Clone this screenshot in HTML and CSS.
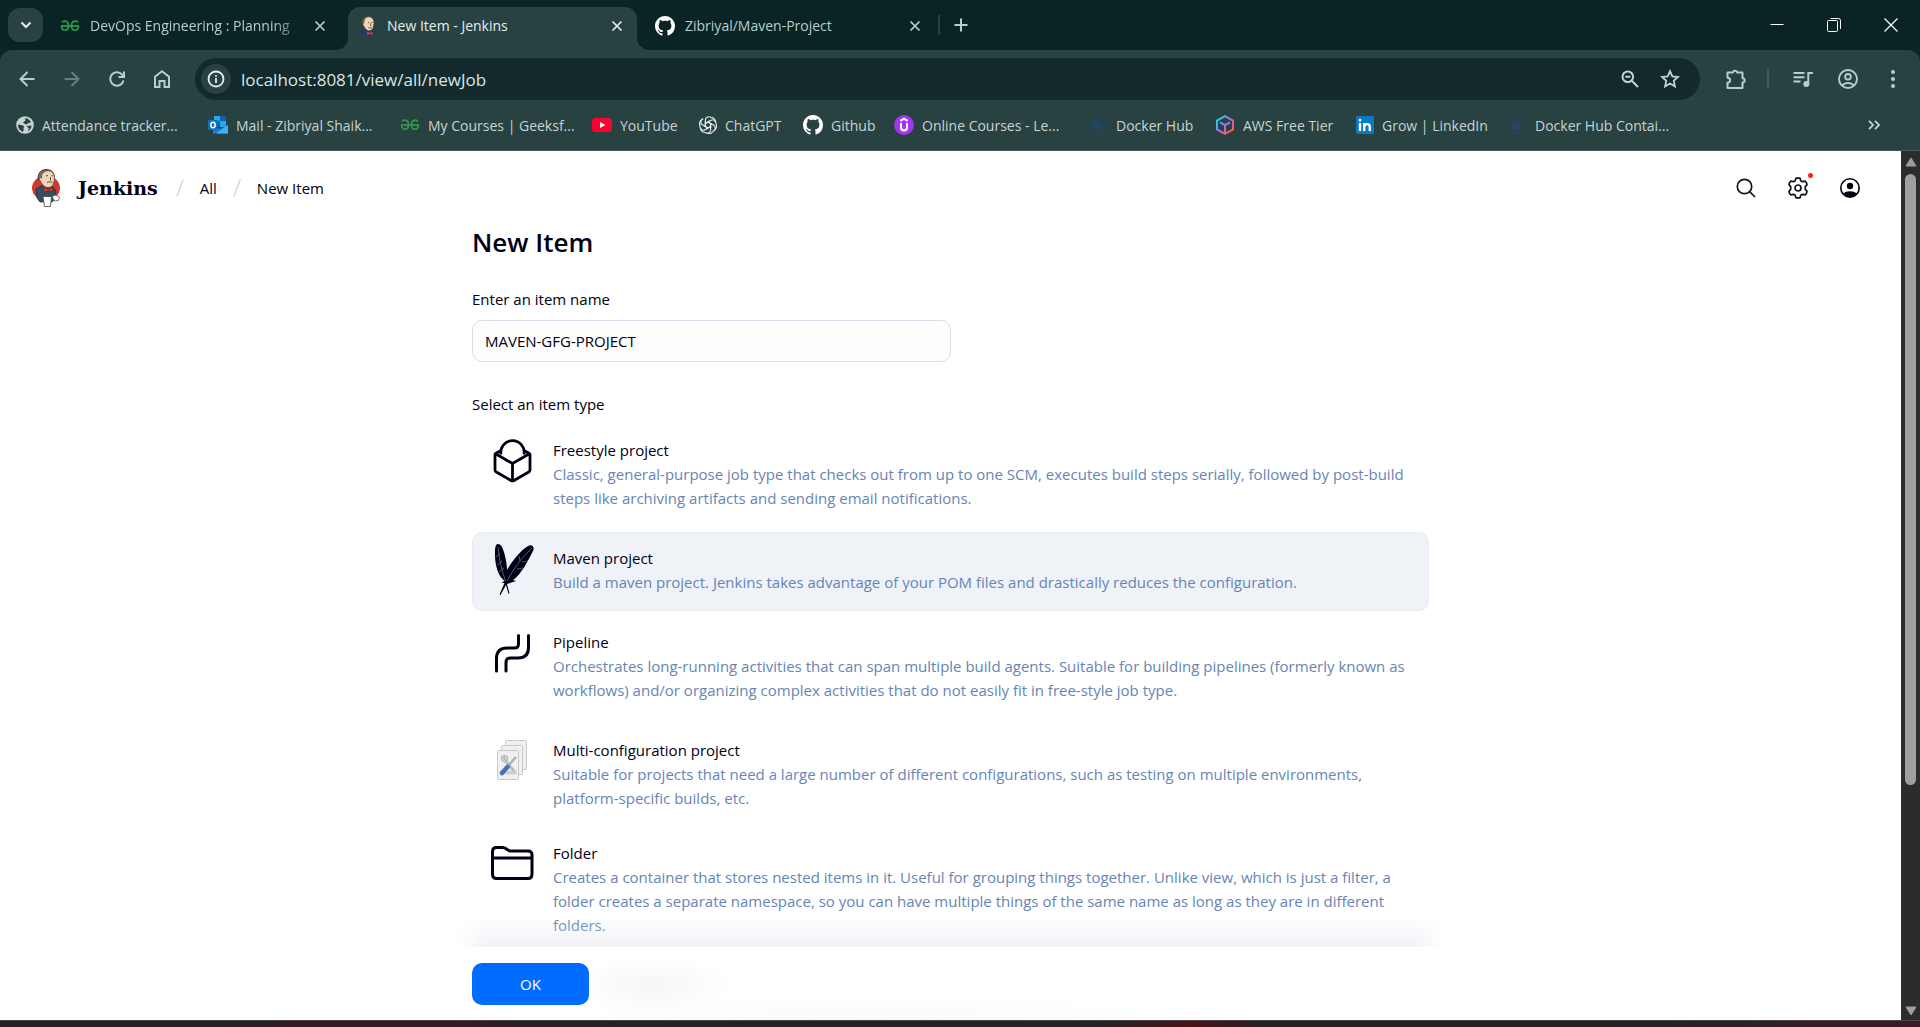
FILE: index.html
```html
<!DOCTYPE html>
<html lang="en">
<head>
<meta charset="utf-8">
<title>New Item - Jenkins</title>
<meta name="viewport" content="width=device-width, initial-scale=1">
<link rel="stylesheet" href="styles.css">
</head>
<body>
<svg class="sprite" aria-hidden="true">
  <symbol id="gfg" viewBox="0 0 20 12"><g fill="none" stroke="#2f9a4b" stroke-width="1.7"><path d="M1 6h18"/><path d="M2 2.300C4 .5 8.500 .5 8.500 5.500c0 6-6.500 6.500-7 .5"/><path d="M18 2.300C16 .5 11.500 .5 11.500 5.500c0 6 6.500 6.500 7 .5"/></g></symbol>
  <symbol id="github" viewBox="0 0 16 16"><path fill="#fff" d="M8 0C3.58 0 0 3.58 0 8c0 3.54 2.29 6.53 5.47 7.59.4.07.55-.17.55-.38 0-.19-.01-.82-.01-1.49-2.01.37-2.53-.49-2.69-.94-.09-.23-.48-.94-.82-1.13-.28-.15-.68-.52-.01-.53.63-.01 1.08.58 1.23.82.72 1.21 1.87.87 2.33.66.07-.52.28-.87.51-1.07-1.78-.2-3.64-.89-3.64-3.95 0-.87.31-1.59.82-2.15-.08-.2-.36-1.02.08-2.12 0 0 .67-.21 2.2.82.64-.18 1.32-.27 2-.27s1.36.09 2 .27c1.53-1.04 2.2-.82 2.2-.82.44 1.1.16 1.92.08 2.12.51.56.82 1.27.82 2.15 0 3.07-1.87 3.75-3.65 3.95.29.25.54.73.54 1.48 0 1.07-.01 1.93-.01 2.2 0 .21.15.46.55.38A8.01 8.01 0 0 0 16 8c0-4.42-3.58-8-8-8z"/></symbol>
  <symbol id="close" viewBox="0 0 12 12"><path d="M1.500 1.500l9 9m0-9l-9 9" stroke="currentColor" stroke-width="1.700" fill="none"/></symbol>
  <symbol id="docker" viewBox="0 0 20 20"><circle cx="10" cy="10" r="9.200" fill="none" stroke="#24456a" stroke-width=".8"/><path fill="#24456a" d="M4 10h9.500c.8 0 1-.8.500-2 .8-.3 1.300.5 1.400 1.200 1 0 1.600.1 1.600.5-.4.800-1.100 1-2.100 1.100C14 13.600 12 15 9 15c-3.200 0-5-1.800-5-5zM5 7.500h2v2H5zm2.300 0h2v2h-2zm2.300 0h2v2h-2zM7.300 5.200h2v2h-2zm2.300-2h2v4h-2z"/></symbol>
</svg>

<header class="browser">
  <div class="tabstrip">
    <button class="tab-search" aria-label="Search tabs"><svg width="12" height="8" viewBox="0 0 12 8"><path d="M1.500 1.500L6 6l4.500-4.500" fill="none" stroke="#e3efee" stroke-width="2"/></svg></button>
    <div class="tabs">
      <div class="tab">
        <svg width="20" height="12"><use href="#gfg"/></svg>
        <span class="tab-title faded">DevOps Engineering : Planning</span>
        <button class="tab-close" aria-label="Close tab"><svg width="12" height="12"><use href="#close"/></svg></button>
      </div>
      <div class="tab active">
        <svg width="18" height="22" viewBox="0 0 20 22"><path fill="#1d3f5c" d="M1 21c0-4 3-5.500 6-6l7 .5c3 .5 5 2 5 5.500z"/><path fill="#7c6355" d="M4 9C2.500 4 6 .5 10 .5S17 3 16.500 8l-1 6.500H6.500z"/><path fill="#f3d6b0" d="M6 6C6.500 2 9 1 11 1.300c4 .5 5 3 5 6.200 0 4-1 8.500-4.500 8.500-3 0-4-2-5-4.500C4.500 11 4.500 8 6 8z"/><path fill="none" stroke="#5a4335" d="M10 7h1.500M13.500 7H15M13 8v3M10.500 13h4"/><path fill="#d93a35" d="M9 17.500l3 1 3-1V21l-3-1-3 1z"/></svg>
        <span class="tab-title">New Item - Jenkins</span>
        <button class="tab-close" aria-label="Close tab"><svg width="12" height="12"><use href="#close"/></svg></button>
      </div>
      <div class="tab">
        <svg width="20" height="20"><use href="#github"/></svg>
        <span class="tab-title">Zibriyal/Maven-Project</span>
        <button class="tab-close" aria-label="Close tab"><svg width="12" height="12"><use href="#close"/></svg></button>
      </div>
    </div>
    <button class="new-tab" aria-label="New tab"><svg width="14" height="14" viewBox="0 0 14 14"><path d="M7 .5v13M.5 7h13" stroke="#b5cfce" stroke-width="2"/></svg></button>
    <div class="window-buttons">
      <button aria-label="Minimize"><svg width="14" height="14" viewBox="0 0 14 14"><path d="M.5 6.500h13" stroke="#fff"/></svg></button>
      <button aria-label="Restore"><svg width="14" height="14" viewBox="0 0 14 14"><path d="M.5 3.500a1 1 0 0 1 1-1h8a1 1 0 0 1 1 1v9a1 1 0 0 1-1 1h-8a1 1 0 0 1-1-1zM3.500.5h8a2 2 0 0 1 2 2v8.500" fill="none" stroke="#fff"/></svg></button>
      <button aria-label="Close window"><svg width="14" height="14" viewBox="0 0 14 14"><path d="M.5.5l13 13m0-13l-13 13" stroke="#fff" stroke-width="1.200"/></svg></button>
    </div>
  </div>

  <div class="toolbar">
    <nav class="nav-buttons" aria-label="Browser">
      <button aria-label="Back"><svg width="16" height="16" viewBox="0 0 16 16"><path d="M15.500 8H2M8.500 1L1.500 8l7 7" fill="none" stroke="#b5cfce" stroke-width="2"/></svg></button>
      <button aria-label="Forward"><svg width="16" height="16" viewBox="0 0 16 16"><path d="M.5 8H14M7.500 1l7 7-7 7" fill="none" stroke="#65807f" stroke-width="2"/></svg></button>
      <button aria-label="Reload"><svg width="16" height="16" viewBox="0 0 16 16"><path d="M14.500 9.500A6.700 6.700 0 1 1 13 3.500l1.500 1.500" fill="none" stroke="#b5cfce" stroke-width="2"/><path d="M15 .5V6H9.500" fill="none" stroke="#b5cfce" stroke-width="2"/></svg></button>
      <button aria-label="Home"><svg width="16" height="18" viewBox="0 0 16 18"><path d="M1 6.800L8 1.300l7 5.500V17h-4.500v-6h-5v6H1z" fill="none" stroke="#b5cfce" stroke-width="2"/></svg></button>
    </nav>
    <div class="omnibox">
      <button class="site-info" aria-label="Site information"><svg width="18" height="18" viewBox="0 0 18 18"><circle cx="9" cy="9" r="7.500" fill="none" stroke="#e3efee" stroke-width="1.800"/><path d="M9 8v5M9 5v1.800" stroke="#e3efee" stroke-width="1.800"/></svg></button>
      <input class="url" type="text" aria-label="Address" value="localhost:8081/view/all/newJob">
      <button aria-label="Zoom"><svg width="18" height="18" viewBox="0 0 18 18"><circle cx="6.800" cy="6.800" r="5.300" fill="none" stroke="#c7d3d3" stroke-width="2"/><path d="M4.300 6.800h5M10.800 10.800l6.200 6.200" stroke="#c7d3d3" stroke-width="2"/></svg></button>
      <button aria-label="Bookmark this page"><svg width="20" height="20" viewBox="0 0 20 20"><path d="M10 2.200l2.300 5.200 5.600.6-4.200 3.800 1.200 5.600L10 14.500l-4.900 2.900 1.200-5.600L2.100 8l5.600-.6z" fill="none" stroke="#c7d3d3" stroke-width="1.800"/></svg></button>
    </div>
    <div class="actions">
      <button aria-label="Extensions"><svg width="22" height="22" viewBox="0 0 22 22"><path d="M2.500 4.500h5.300a2.300 2.300 0 0 1 4.400 0h5.300v5.800a2.100 2.100 0 0 1 0 4.200v5.500h-15v-5.300c3.500-.3 3.500-4.700 0-5z" fill="none" stroke="#b5cfce" stroke-width="2" stroke-linejoin="round"/></svg></button>
      <span class="divider"></span>
      <button aria-label="Media"><svg width="20" height="18" viewBox="0 0 20 18"><path d="M.5 3h11M.5 7.300h11M.5 11.500h7" stroke="#b5cfce" stroke-width="2"/><path d="M15.300 14V3H20" fill="none" stroke="#b5cfce" stroke-width="2"/><circle cx="13.300" cy="14" r="3" fill="#b5cfce"/></svg></button>
      <button aria-label="Profile"><svg width="20" height="20" viewBox="0 0 20 20"><g fill="none" stroke="#b5cfce" stroke-width="1.900"><circle cx="10" cy="10" r="9"/><circle cx="10" cy="7.800" r="2.800"/><path d="M4 16.500c3-3.300 9-3.300 12 0"/></g></svg></button>
      <button aria-label="Menu"><svg width="4" height="18" viewBox="0 0 4 18"><g fill="#b5cfce"><circle cx="2" cy="2" r="2"/><circle cx="2" cy="9" r="2"/><circle cx="2" cy="16" r="2"/></g></svg></button>
    </div>
  </div>

  <nav class="bookmarks" aria-label="Bookmarks">
    <a href="#"><svg width="18" height="18" viewBox="0 0 18 18"><circle cx="9" cy="9" r="8.800" fill="#c7d3d3"/><path fill="#284242" d="M2 8.500c2 0 4 .5 6 1.500.8 1-1 1.500-.5 2.500s0 2-.5 3.300C4 15 2 12 2 8.500zM9 2.300c3 0 5 1.700 6 4.200l-3 .5-1 1.500-2-.5L7 6.500l2.500-2zM10.500 10l5-.5c0 2.500-1.500 4.500-4 6L13 12.500z"/></svg>Attendance tracker...</a>
    <a href="#"><svg width="20" height="18" viewBox="0 0 20 18"><path fill="#28a8ea" d="M6 0h12v11H6z"/><path fill="#0f5fb5" d="M12 0h6v5h-6zM6 5h6v6H6z"/><path fill="#1683d8" d="M5 9l7 4 8-4v8.500H5z"/><path fill="#37b6f5" d="M20 9v8.500H8z"/><path fill="#0f6cc8" d="M0 4h10v10H0z"/><ellipse cx="5" cy="9" rx="2.200" ry="2.700" fill="none" stroke="#fff" stroke-width="1.500"/></svg>Mail - Zibriyal Shaik...</a>
    <a href="#"><svg width="20" height="12"><use href="#gfg"/></svg>My Courses | Geeksf...</a>
    <a href="#"><svg width="20" height="14" viewBox="0 0 20 14"><rect width="20" height="14" rx="3.500" fill="#ff0033"/><path fill="#fff" d="M8 4l5.500 3L8 10z"/></svg>YouTube</a>
    <a href="#"><svg width="18" height="18" viewBox="-9 -9 18 18"><g fill="none" stroke="#e3e9e9" stroke-width="1.200"><path id="petal" d="M-2.600-1.500V-5c0-3 3.500-4.200 5.800-2.300M-2.600-1.500L0-3l4.200 2.400"/><use href="#petal" transform="rotate(60)"/><use href="#petal" transform="rotate(120)"/><use href="#petal" transform="rotate(180)"/><use href="#petal" transform="rotate(240)"/><use href="#petal" transform="rotate(300)"/><path d="M3.200-7.300C5.500-7.500 7.600-5.500 7.300-3M7.900-.9c1.300 2 .6 4.700-1.300 5.800M4.700 6.400c-.8 2.200-3.600 3-5.600 1.600M-3.200 7.300C-5.500 7.500-7.600 5.500-7.300 3M-7.900.9c-1.300-2-.6-4.700 1.300-5.800"/></g></svg>ChatGPT</a>
    <a href="#"><svg width="20" height="20"><use href="#github"/></svg>Github</a>
    <a href="#"><svg width="20" height="20" viewBox="0 0 20 20"><circle cx="10" cy="10" r="10" fill="#a435f0"/><path d="M6.300 5.800L10 3.600l3.700 2.200M7 8v4.500c0 4 6 4 6 0V8" fill="none" stroke="#fff" stroke-width="2"/></svg>Online Courses - Le...</a>
    <a href="#"><svg width="20" height="20"><use href="#docker"/></svg>Docker Hub</a>
    <a href="#"><svg width="20" height="20" viewBox="0 0 20 20"><defs><linearGradient id="cube" x1="0" y1="0" x2="1" y2="1"><stop offset=".1" stop-color="#20d0e8"/><stop offset=".5" stop-color="#a06bff"/><stop offset=".8" stop-color="#ff5a4a"/></linearGradient></defs><path d="M10 1.200L18 5.600v8.800l-8 4.400-8-4.400V5.600zM5 7.300l5 2.900 5-2.900M10 10.200V19" fill="none" stroke="url(#cube)" stroke-width="2"/></svg>AWS Free Tier</a>
    <a href="#"><svg width="18" height="18" viewBox="0 0 18 18"><rect width="18" height="18" rx="1.500" fill="#0a7bc2"/><path fill="none" stroke="#fff" stroke-width="2.400" d="M4 7v8M4 3v2.500M8.200 15V7M8.200 11c0-3.500 5.600-4.200 5.600 0v4"/></svg>Grow | LinkedIn</a>
    <a href="#"><svg width="20" height="20"><use href="#docker"/></svg>Docker Hub Contai...</a>
    <button class="overflow" aria-label="More bookmarks"><svg width="12" height="10" viewBox="0 0 12 10"><path d="M1 .8L5 5 1 9.200M7 .8L11 5 7 9.200" fill="none" stroke="#c7d3d3" stroke-width="1.800"/></svg></button>
  </nav>
</header>

<div class="viewport">
  <div class="page">
    <header class="app-header">
      <a class="brand" href="#">
        <svg width="28" height="38" viewBox="0 0 28 38"><ellipse cx="14" cy="19" rx="14" ry="12.500" fill="#d33833"/><path fill="#335061" stroke="#1c2a35" stroke-width=".7" d="M4 20l7-4 9 1 4 5-1 8-3 3H8l-3-4z"/><path fill="#817066" stroke="#2d2320" stroke-width=".8" d="M7 11C4.500 6 8 .5 14 .5S23 4 22 10H8z"/><path fill="#f0d6b7" stroke="#4a3b30" stroke-width=".7" d="M9.500 6C12 1 18 .5 21 4c2 2.500 1.500 6 1 9-1 4-3 5.500-6 5.500S10 16 8.500 12C6.500 11.500 7 8 9.500 9z"/><path fill="none" stroke="#4a3b30" stroke-width=".9" d="M14 7l2-.5m3.500 0l1.500.5M18.500 8v3.500M15 13.500c2-1 4-1 5.500.3"/><path fill="#d33833" stroke="#81140f" stroke-width=".5" d="M12 18.500l4.500 2 4-2.500v5l-4-1.500-4.500 2z"/><path fill="#fff" stroke="#444" stroke-width=".8" d="M11 27.500h8.500l-1 10h-6z"/><path fill="#fff" stroke="#555" stroke-width=".8" d="M20 27.500l3.500-1.500 4 2-1 3.500-4 .5z"/></svg>
        Jenkins</a>
      <nav class="crumbs" aria-label="Breadcrumbs">
        <svg width="8" height="18" viewBox="0 0 8 18"><path d="M7.300.5l-6.500 17" stroke="#cfd8e8" stroke-width="1.500"/></svg>
        <a href="#">All</a>
        <svg width="8" height="18" viewBox="0 0 8 18"><path d="M7.300.5l-6.500 17" stroke="#cfd8e8" stroke-width="1.500"/></svg>
        <a href="#">New Item</a>
      </nav>
      <div class="app-actions">
        <button aria-label="Search"><svg width="20" height="20" viewBox="0 0 20 20"><path d="M13.600 13.600l5.400 5.400" stroke="#14141f" stroke-width="1.700"/><circle cx="8.500" cy="8.500" r="7.200" fill="none" stroke="#14141f" stroke-width="1.700"/></svg></button>
        <button class="manage" aria-label="Manage Jenkins"><svg width="20" height="22" viewBox="0 0 20 22"><path d="M8 1.200h4l.8 2.500 1.700 1 2.700-.6q1.600 1.200 1.800 3.500l-1.700 2v2.800l1.700 2q-.2 2.300-1.800 3.500l-2.700-.6-1.700 1-.8 2.500H8l-.8-2.500-1.700-1-2.700.6Q1.200 16.700 1 14.400l1.700-2V9.600L1 7.600Q1.200 5.300 2.800 4.100l2.700.6 1.700-1z" fill="none" stroke="#14141f" stroke-width="1.700" stroke-linejoin="round"/><circle cx="10" cy="11" r="3" fill="none" stroke="#14141f" stroke-width="1.700"/></svg><span class="alert-dot"></span></button>
        <button aria-label="User"><svg width="20" height="20" viewBox="0 0 20 20"><circle cx="10" cy="10" r="9.200" fill="none" stroke="#000014" stroke-width="1.600"/><circle cx="10" cy="8" r="3.200" fill="#000014"/><path d="M3.200 15.800C5.500 12.500 14.500 12.500 16.800 15.800 13.500 20.300 6.500 20.300 3.200 15.800z" fill="#000014"/></svg></button>
      </div>
    </header>

    <main class="content">
      <h1>New Item</h1>
      <label class="field-label" for="name">Enter an item name</label>
      <input class="name-input" id="name" type="text" value="MAVEN-GFG-PROJECT">
      <h2 class="field-label type-label" id="type">Select an item type</h2>
      <div class="items" role="radiogroup" aria-labelledby="type">
        <label class="item">
          <input type="radio" name="mode">
          <svg width="48" height="48" viewBox="0 0 48 48"><g fill="none" stroke="#000014" stroke-width="2.800" stroke-linejoin="round"><path d="M13 18.500a11.700 11.700 0 1 1 23 0"/><path d="M24.500 27.500L8 18c-.7-.4-1-.1-1 .7v15c0 1.200.4 1.800 1.300 2.300L23 44.500c1 .6 2 .6 3 0L40.700 36c.9-.5 1.300-1.100 1.300-2.300v-15c0-.8-.3-1.100-1-.7zV45M7.500 17.500l5.500-3M41.500 17.500l-5.500-3"/></g></svg>
          <span class="item-text"><span class="item-name">Freestyle project</span><span class="item-desc">Classic, general-purpose job type that checks out from up to one SCM, executes build steps serially, followed by post-build steps like archiving artifacts and sending email notifications.</span></span>
        </label>
        <label class="item">
          <input type="radio" name="mode" checked>
          <svg width="48" height="52" viewBox="0 0 48 52"><path fill="#000014" d="M10 0c3 0 5 4 6.500 10C18 16 19 21 19 26c5-9 14-20 21-24 4-2 7 1 5 5C41 15 33 31 25 36l3 1-6 2-3 1 2.500 9.500-1 .3L18 41l-5.500 10-1-.5L16.500 39l-3-.5 3-1.500C10 32 7 21 7 11c0-6 0-11 3-11z"/><path fill="none" stroke="#79798a" stroke-width=".7" d="M10 3c1 12 4 24 7.500 34M19 37C25 26 33 14 44 4M8 13l4-3M9 21l5-4M11 28l5-4M34 18l6-1M29 25l6-1M32 17l-1-5"/></svg>
          <span class="item-text"><span class="item-name">Maven project</span><span class="item-desc">Build a maven project. Jenkins takes advantage of your POM files and drastically reduces the configuration.</span></span>
        </label>
        <label class="item">
          <input type="radio" name="mode">
          <svg width="48" height="48" viewBox="0 0 48 48"><path d="M30.500 7.500V16q0 4-4 4H19Q8.500 20 8.500 30.500V43M18 43v-8.500q0-4.500 4.500-4.500H30q10.500 0 10.500-10.500v-12" fill="none" stroke="#000014" stroke-width="3" stroke-linecap="round"/></svg>
          <span class="item-text"><span class="item-name">Pipeline</span><span class="item-desc">Orchestrates long-running activities that can span multiple build agents. Suitable for building pipelines (formerly known as workflows) and/or organizing complex activities that do not easily fit in free-style job type.</span></span>
        </label>
        <label class="item compact">
          <input type="radio" name="mode">
          <svg width="48" height="48" viewBox="0 0 48 48"><g fill="#f0f0f0" stroke="#c9c9c9"><rect x="17.500" y="4.500" width="21" height="29" rx="1"/><rect x="13.500" y="9.500" width="21" height="29" rx="1"/><rect x="9.500" y="14.500" width="21" height="29" rx="1"/></g><path d="M14 36.500h13" stroke="#d0d0d0" stroke-width="4" stroke-linecap="round"/><path d="M15 21l2.500 2.500M17 24.500L26 35" stroke="#bdbdbd" stroke-width="3"/><circle cx="16.500" cy="22.500" r="3" fill="none" stroke="#bdbdbd" stroke-width="1.500"/><path d="M28 21l-8 9" stroke="#a4b3c9" stroke-width="2.500"/><path d="M19.500 31L14 37" stroke="#4473b8" stroke-width="4.500" stroke-linecap="round"/></svg>
          <span class="item-text"><span class="item-name">Multi-configuration project</span><span class="item-desc">Suitable for projects that need a large number of different configurations, such as testing on multiple environments, platform-specific builds, etc.</span></span>
        </label>
        <label class="item">
          <input type="radio" name="mode">
          <svg width="48" height="48" viewBox="0 0 48 48"><path d="M4.500 35V12.500q0-4 4-4h6q2 0 3.500 1.200l1.300 1q1.500 1.300 3.500 1.300H40q4 0 4 4v19q0 4.500-4 4.500H8.500q-4 0-4-4.500zM4.500 19h39.500" fill="none" stroke="#000014" stroke-width="3"/></svg>
          <span class="item-text"><span class="item-name">Folder</span><span class="item-desc">Creates a container that stores nested items in it. Useful for grouping things together. Unlike view, which is just a filter, a folder creates a separate namespace, so you can have multiple things of the same name as long as they are in different folders.</span></span>
        </label>
      </div>
      <div class="submit-bar"><button class="ok">OK</button></div>
    </main>
  </div>
  <div class="scrollbar" aria-hidden="true">
    <svg width="12" height="10" viewBox="0 0 12 10"><path d="M6 1l5 8H1z" fill="#9f9f9f" stroke="#9f9f9f" stroke-linejoin="round"/></svg>
    <div class="track"><div class="thumb"></div></div>
    <svg width="12" height="10" viewBox="0 0 12 10"><path d="M6 9l5-8H1z" fill="#9f9f9f" stroke="#9f9f9f" stroke-linejoin="round"/></svg>
  </div>
</div>
<div class="taskbar"></div>
</body>
</html>
```
FILE: styles.css
```css
* { box-sizing: border-box; }

body {
  margin: 0;
  height: 100vh;
  display: flex;
  flex-direction: column;
  overflow: hidden;
  font-family: "Open Sans", "Noto Sans", sans-serif;
  font-size: 15px;
  color: #000014;
}

button {
  display: flex;
  align-items: center;
  justify-content: center;
  padding: 0;
  border: 0;
  background: none;
  font: inherit;
  color: inherit;
}

a { color: inherit; text-decoration: none; }
svg { display: block; flex: none; }
.sprite { position: absolute; width: 0; height: 0; }

/* Browser frame */
.browser { flex: none; background: #0a2324; border-bottom: 1px solid #48565a; }

.tabstrip { display: flex; height: 50px; }
.tab-search { width: 35px; height: 34px; margin: 8px 5px 0 8px; border-radius: 12px; background: #284242; }
.tabs { display: flex; padding-top: 7px; }

.tab {
  position: relative;
  display: flex;
  align-items: center;
  gap: 10px;
  width: 289px;
  padding: 0 12px 6px 11px;
  border-radius: 12px 12px 0 0;
  font-size: 14px;
  color: #b5cfce;
}
.tab:first-child { width: 300px; padding-right: 20px; padding-left: 12px; }
.tab:last-child { padding-left: 18px; padding-right: 3px; }
.tab.active { background: #284242; color: #e3efee; }
.tab.active::before,
.tab.active::after { content: ""; position: absolute; bottom: 0; width: 12px; height: 12px; }
.tab.active::before { right: 100%; background: radial-gradient(circle at 0 0, transparent 12px, #284242 12px); }
.tab.active::after { left: 100%; background: radial-gradient(circle at 100% 0, transparent 12px, #284242 12px); }
.tab-title { flex: 1; white-space: nowrap; line-height: 20px; }
.faded { -webkit-mask-image: linear-gradient(to right, #000 86%, transparent 104%); mask-image: linear-gradient(to right, #000 86%, transparent 104%); }
.tab-close { width: 16px; height: 16px; }
.new-tab { width: 44px; height: 20px; margin-top: 15px; margin-left: 12px; border-left: 2px solid #284242; }
.window-buttons { display: flex; margin-left: auto; padding-right: 1px; height: 49px; }
.window-buttons button { width: 57px; }

.toolbar {
  display: flex;
  align-items: center;
  padding: 8px 5px 8px 4px;
  background: #284242;
  border-radius: 12px 12px 0 0;
}
.nav-buttons { display: flex; margin-right: 11px; }
.nav-buttons button { width: 45px; height: 42px; }
.omnibox {
  flex: 1;
  display: flex;
  align-items: center;
  gap: 21px;
  height: 42px;
  padding: 0 20px 0 6px;
  border-radius: 21px;
  background: #122a2b;
}
.site-info { width: 30px; height: 30px; border-radius: 50%; background: #284242; }
.url {
  flex: 1;
  min-width: 0;
  margin-left: -11px;
  padding: 0;
  border: 0;
  background: none;
  outline: 0;
  font: inherit;
  font-size: 17px;
  color: #dbe5e4;
}
.actions { display: flex; align-items: center; padding-left: 23px; }
.actions button { width: 45px; height: 42px; }
.actions button:first-child { width: 26px; }
.divider { width: 2px; height: 20px; margin: 0 11px 0 18px; background: #3f5b5b; }

.bookmarks {
  display: grid;
  grid-template-columns: 192px 192px 192px 107px 104px 91px 194px 127px 141px 151px 1fr auto;
  align-items: center;
  height: 42px;
  padding: 0 40px 8px 16px;
  background: #284242;
  font-size: 14px;
  color: #c7d3d3;
  white-space: nowrap;
}
.bookmarks a { display: flex; align-items: center; gap: 8px; }

/* Page */
.viewport { flex: 1; display: flex; min-height: 0; background: #fff; }
.page { flex: 1; min-width: 0; overflow: hidden; }

.app-header { display: flex; align-items: center; height: 74px; padding: 0 41px 0 32px; }
.brand { display: flex; align-items: center; gap: 18px; font: bold 19px "DejaVu Serif", serif; }
.crumbs { display: flex; align-items: center; gap: 16px; margin-left: 18px; font-size: 15px; }
.app-actions { display: flex; gap: 32px; margin-left: auto; }
.manage { position: relative; }
.alert-dot { position: absolute; top: -4px; right: -5px; width: 5px; height: 5px; border-radius: 50%; background: #fe1f1f; }

.content { width: 957px; max-width: 100%; margin: 0 auto; }
h1 { margin: 0; padding-top: 1px; font-size: 26px; line-height: 32px; font-weight: 600; }
.field-label { display: block; margin: 29px 0 9px; font-size: 15px; line-height: 24px; font-weight: 400; }
.name-input {
  display: block;
  width: 50%;
  height: 42px;
  padding: 0 12px;
  border: 1px solid #d8dee9;
  border-radius: 10px;
  background: #fdfdfe;
  font: inherit;
  color: inherit;
}
.type-label { margin-top: 30px; margin-bottom: 8px; }

.items { display: grid; gap: 5px; }
.item {
  display: flex;
  align-items: flex-start;
  gap: 17px;
  padding: 0 16px 17px 16px;
  border-radius: 10px;
}
.item.compact { padding-bottom: 12px; }
.item:has(:checked) { background: #eff2f7; box-shadow: inset 0 0 0 1px #e9edf3; }
.item input { position: absolute; opacity: 0; }
.item svg { margin-top: 12px; margin-bottom: -12px; }
.item-text { display: flex; flex-direction: column; padding-top: 14px; line-height: 24px; }
.item-desc { color: #6685b5; }

.submit-bar {
  position: fixed;
  bottom: 7px;
  width: 957px;
  max-width: 100%;
  padding: 16px 0 15px;
  background:
    radial-gradient(ellipse 80px 28px at 180px 38px, #f6f6f8, transparent),
    radial-gradient(ellipse 320px 26px at 400px 73px, #f9fafc, transparent),
    #fff;
}
/* Shade that the bar casts on the list above it */
.submit-bar::before {
  content: "";
  position: absolute;
  left: -16px;
  right: -16px;
  bottom: 100%;
  height: 32px;
  background: linear-gradient(to top, rgba(226, 231, 240, .5), transparent);
  -webkit-mask-image: linear-gradient(to right, transparent, #000 32px, #000 calc(100% - 32px), transparent);
  mask-image: linear-gradient(to right, transparent, #000 32px, #000 calc(100% - 32px), transparent);
}
.ok { width: 117px; height: 42px; border-radius: 10px; background: #006bff; color: #fff; }

/* Scrollbar */
.scrollbar { display: flex; flex-direction: column; align-items: center; width: 19px; padding: 6px 0 4px; background: #2c2c2c; }
.track { flex: 1; width: 11px; padding: 7px 0; }
.thumb { height: 74%; border-radius: 6px; background: #9f9f9f; }

.taskbar {
  flex: none;
  height: 7px;
  border-top: 1px solid #4a4a4d;
  background: linear-gradient(90deg, #212225 11%, #341a26 16%, #331a29 24%, #212225 32%, #212225 57%, #4c1214 62%, #222225 66%, #222225 84%, #3b1a2a);
}
```
